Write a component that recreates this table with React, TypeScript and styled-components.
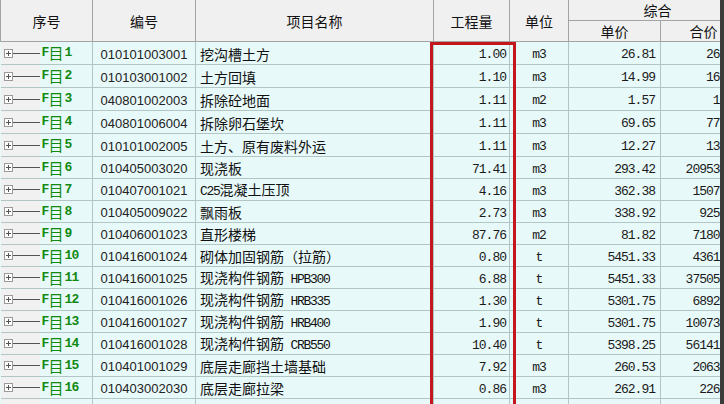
import React from "react";
import styled, { createGlobalStyle } from "styled-components";

const GlobalStyle = createGlobalStyle`
  html, body { margin: 0; padding: 0; background: #ffffff; }
  body { font-family: "Noto Sans CJK SC", sans-serif; line-height: 16px; }
`;

type Row = {
  seq: number;
  code: string;
  name: string;
  qty: string;
  unit: string;
  price: string;
  total: string;
  h: number;
};

const rows: Row[] = [
  { seq: 1, code: "010101003001", name: "挖沟槽土方", qty: "1.00", unit: "m3", price: "26.81", total: "26.81", h: 23 },
  { seq: 2, code: "010103001002", name: "土方回填", qty: "1.10", unit: "m3", price: "14.99", total: "16.49", h: 23 },
  { seq: 3, code: "040801002003", name: "拆除砼地面", qty: "1.11", unit: "m2", price: "1.57", total: "1.74", h: 23 },
  { seq: 4, code: "040801006004", name: "拆除卵石堡坎", qty: "1.11", unit: "m3", price: "69.65", total: "77.31", h: 23 },
  { seq: 5, code: "010101002005", name: "土方、原有废料外运", qty: "1.11", unit: "m3", price: "12.27", total: "13.62", h: 23 },
  { seq: 6, code: "010405003020", name: "现浇板", qty: "71.41", unit: "m3", price: "293.42", total: "20953.12", h: 22 },
  { seq: 7, code: "010407001021", name: "C25混凝土压顶", qty: "4.16", unit: "m3", price: "362.38", total: "1507.50", h: 22 },
  { seq: 8, code: "010405009022", name: "飘雨板", qty: "2.73", unit: "m3", price: "338.92", total: "925.25", h: 22 },
  { seq: 9, code: "010406001023", name: "直形楼梯", qty: "87.76", unit: "m2", price: "81.82", total: "7180.52", h: 22 },
  { seq: 10, code: "010416001024", name: "砌体加固钢筋（拉筋）", qty: "0.80", unit: "t", price: "5451.33", total: "4361.06", h: 22 },
  { seq: 11, code: "010416001025", name: "现浇构件钢筋 HPB300", qty: "6.88", unit: "t", price: "5451.33", total: "37505.15", h: 22 },
  { seq: 12, code: "010416001026", name: "现浇构件钢筋 HRB335", qty: "1.30", unit: "t", price: "5301.75", total: "6892.28", h: 22 },
  { seq: 13, code: "010416001027", name: "现浇构件钢筋 HRB400", qty: "1.90", unit: "t", price: "5301.75", total: "10073.33", h: 22 },
  { seq: 14, code: "010416001028", name: "现浇构件钢筋 CRB550", qty: "10.40", unit: "t", price: "5398.25", total: "56141.80", h: 22 },
  { seq: 15, code: "010401001029", name: "底层走廊挡土墙基础", qty: "7.92", unit: "m3", price: "260.53", total: "2063.40", h: 22 },
  { seq: 16, code: "010403002030", name: "底层走廊拉梁", qty: "0.86", unit: "m3", price: "262.91", total: "226.10", h: 22 },
];

const Frame = styled.div`
  width: 724px;
  height: 404px;
  overflow: hidden;
  display: flex;
  background: #e8f9f9;
`;

const Viewport = styled.div`
  position: relative;
  width: 720px;
  height: 404px;
  overflow: hidden;
  flex: none;
`;

const Edge = styled.div`
  width: 4px;
  flex: none;
  background: #3b3b3b;
`;

const Grid = styled.table`
  border-collapse: collapse;
  table-layout: fixed;
  width: 746px;
  border-spacing: 0;
`;

const HeadCell = styled.th<{ $h?: number }>`
  background: #f0f0f0;
  border: 1px solid #a3a3a3;
  border-top: none;
  font-family: "Noto Sans CJK SC", sans-serif;
  font-weight: 400;
  font-size: 14px;
  line-height: 16px;
  color: #111;
  text-align: center;
  vertical-align: middle;
  padding: 0;
  height: ${(p) => p.$h ?? 20}px;
  white-space: nowrap;
  overflow: hidden;
`;

const BodyRow = styled.tr<{ $h: number }>`
  height: ${(p) => p.$h}px;
`;

const Cell = styled.td<{ $align?: "left" | "right" | "center"; $pad?: number }>`
  background: #e8f9f9;
  border: 1px solid #b3c6c6;
  padding: 0;
  padding-left: ${(p) => (p.$align === "left" ? p.$pad ?? 4 : 0)}px;
  padding-right: ${(p) => (p.$align === "right" ? p.$pad ?? 4 : 0)}px;
  text-align: ${(p) => p.$align ?? "center"};
  vertical-align: middle;
  white-space: nowrap;
  overflow: hidden;
  line-height: 16px;
  color: #111;
`;

const TreeCell = styled.td`
  padding: 0;
  border: 1px solid #b3c6c6;
  border-left: none;
  background: #e8f9f9;
  vertical-align: middle;
  line-height: 16px;
  height: 1px;
`;

const TreeInner = styled.div`
  display: flex;
  align-items: stretch;
  height: 100%;
  min-height: 20px;
`;

const Gutter = styled.div`
  width: 39px;
  flex: none;
  display: flex;
  align-items: center;
  background: #f1f1f1;
  padding-left: 3px;
  box-sizing: border-box;
`;

const Expander = styled.span`
  width: 9px;
  height: 9px;
  box-sizing: border-box;
  border: 1px solid #9a9a9a;
  background: #ffffff;
  position: relative;
  flex: none;
  &::before {
    content: "";
    position: absolute;
    left: 1px;
    right: 1px;
    top: 3px;
    height: 1px;
    background: #555;
  }
  &::after {
    content: "";
    position: absolute;
    top: 1px;
    bottom: 1px;
    left: 3px;
    width: 1px;
    background: #555;
  }
`;

const Connector = styled.span`
  flex: 1;
  height: 1px;
  background: #555;
`;

const Label = styled.div`
  display: flex;
  align-items: center;
  padding-left: 2px;
  color: #128a12;
  font-size: 13px;
  line-height: 16px;
  white-space: nowrap;
`;

const LabelLatin = styled.span`
  font-family: "Liberation Mono", monospace;
  font-weight: 700;
  font-size: 13px;
  letter-spacing: -0.8px;
`;

const LabelCjk = styled.span`
  font-family: "Noto Sans CJK SC", sans-serif;
  font-size: 15px;
  margin-right: 1px;
`;

const Code = styled.span`
  font-family: "Liberation Sans", Arial, sans-serif;
  font-size: 13px;
  color: #222;
`;

const NameText = styled.span`
  font-family: "Noto Sans CJK SC", sans-serif;
  font-size: 14px;
  color: #111;
`;

const NameAscii = styled.span`
  font-family: "Liberation Mono", monospace;
  font-size: 13px;
  letter-spacing: -1.3px;
`;

const Num = styled.span`
  font-family: "Liberation Mono", monospace;
  font-size: 13px;
  letter-spacing: -1px;
  color: #1a1a1a;
`;

const RedBox = styled.div`
  position: absolute;
  left: 430px;
  top: 42px;
  width: 86px;
  height: 380px;
  box-sizing: border-box;
  border: 3px solid #c3161d;
  pointer-events: none;
`;

function renderName(name: string) {
  const parts = name.split(/([A-Za-z0-9 ]+)/);
  return parts.map((p, i) =>
    i % 2 === 1 ? <NameAscii key={i}>{p}</NameAscii> : <React.Fragment key={i}>{p}</React.Fragment>
  );
}

export default function App() {
  return (
    <>
      <GlobalStyle />
      <Frame>
        <Viewport>
          <Grid>
            <colgroup>
              <col style={{ width: 92 }} />
              <col style={{ width: 103 }} />
              <col style={{ width: 238 }} />
              <col style={{ width: 76 }} />
              <col style={{ width: 59 }} />
              <col style={{ width: 92 }} />
              <col style={{ width: 86 }} />
            </colgroup>
            <thead>
              <tr>
                <HeadCell rowSpan={2}>序号</HeadCell>
                <HeadCell rowSpan={2}>编号</HeadCell>
                <HeadCell rowSpan={2}>项目名称</HeadCell>
                <HeadCell rowSpan={2}>工程量</HeadCell>
                <HeadCell rowSpan={2}>单位</HeadCell>
                <HeadCell colSpan={2}>综合</HeadCell>
              </tr>
              <tr>
                <HeadCell>单价</HeadCell>
                <HeadCell>合价</HeadCell>
              </tr>
            </thead>
            <tbody>
              {rows.map((r) => (
                <BodyRow key={r.seq} $h={r.h}>
                  <TreeCell>
                    <TreeInner>
                      <Gutter>
                        <Expander />
                        <Connector />
                      </Gutter>
                      <Label>
                        <LabelLatin>F</LabelLatin>
                        <LabelCjk>目</LabelCjk>
                        <LabelLatin>{r.seq}</LabelLatin>
                      </Label>
                    </TreeInner>
                  </TreeCell>
                  <Cell $align="center">
                    <Code>{r.code}</Code>
                  </Cell>
                  <Cell $align="left" $pad={4}>
                    <NameText>{renderName(r.name)}</NameText>
                  </Cell>
                  <Cell $align="right" $pad={3}>
                    <Num>{r.qty}</Num>
                  </Cell>
                  <Cell $align="center">
                    <Num>{r.unit}</Num>
                  </Cell>
                  <Cell $align="right" $pad={5}>
                    <Num>{r.price}</Num>
                  </Cell>
                  <Cell $align="right" $pad={6}>
                    <Num>{r.total}</Num>
                  </Cell>
                </BodyRow>
              ))}
              <BodyRow $h={22}>
                <TreeCell>
                  <TreeInner>
                    <Gutter />
                  </TreeInner>
                </TreeCell>
                <Cell />
                <Cell />
                <Cell />
                <Cell />
                <Cell />
                <Cell />
              </BodyRow>
            </tbody>
          </Grid>
          <RedBox />
        </Viewport>
        <Edge />
      </Frame>
    </>
  );
}
